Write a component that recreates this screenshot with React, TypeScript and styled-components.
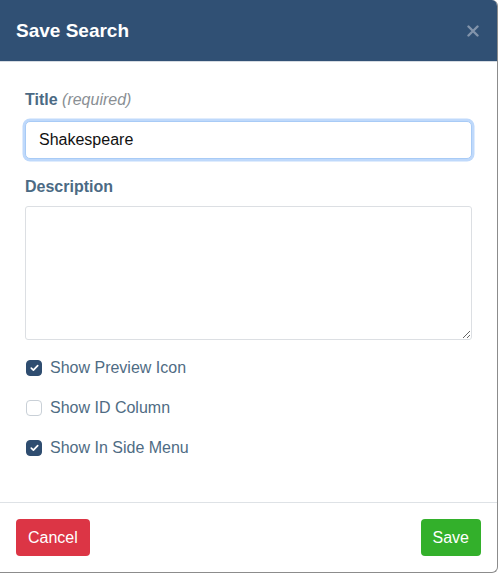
import styled, { createGlobalStyle } from "styled-components";

const GlobalStyle = createGlobalStyle`
  html, body {
    margin: 0;
    padding: 0;
    background: #fff;
    font-family: "Liberation Sans", Arial, sans-serif;
  }
`

const Modal = styled.div`
  width: 497px;
  height: 572px;
  display: flex;
  flex-direction: column;
  background: #fff;
  border-right: 1px solid #8c8c8c;
  border-bottom: 1px solid #8c8c8c;
  border-radius: 0 6px 6px 0;
  overflow: hidden;
`

const Header = styled.div`
  height: 61px;
  flex-shrink: 0;
  display: flex;
  align-items: center;
  justify-content: space-between;
  padding: 0 16px;
  background: #305074;
  border-bottom: 1px solid #d5dbe2;
`

const HeaderTitle = styled.h2`
  margin: 0;
  color: #fff;
  font-size: 19px;
  font-weight: bold;
`

const CloseButton = styled.button`
  border: none;
  background: transparent;
  padding: 0;
  margin-right: 2px;
  display: flex;
  cursor: pointer;
`

const Body = styled.div`
  flex: 1;
  padding: 26px 25px 0;
  display: flex;
  flex-direction: column;
`

const Label = styled.label<{ spaced?: boolean }>`
  display: block;
  margin-top: ${p => p.spaced ? "16px" : "0"};
  font-size: 16px;
  line-height: 24px;
  font-weight: bold;
  color: #4b6a84;
`

const Hint = styled.span`
  font-style: italic;
  font-weight: normal;
  color: #8a8f94;
  font-size: 16px;
`

const TextInput = styled.input`
  box-sizing: border-box;
  width: 100%;
  height: 38px;
  margin-top: 9px;
  padding: 0 13px;
  font-size: 16px;
  font-family: "Liberation Sans", Arial, sans-serif;
  color: #111;
  border: 1px solid #a8cbf6;
  border-radius: 5px;
  box-shadow: 0 0 0 2.5px #bfd9fb;
  outline: none;
`

const TextArea = styled.textarea`
  box-sizing: border-box;
  width: 100%;
  height: 134px;
  margin-top: 7px;
  padding: 8px 12px;
  font-size: 16px;
  font-family: "Liberation Sans", Arial, sans-serif;
  border: 1px solid #dcdfe3;
  border-radius: 3px;
  resize: vertical;
  outline: none;
`

const CheckList = styled.div`
  display: flex;
  flex-direction: column;
  gap: 16px;
  margin-top: 16px;
`

const CheckRow = styled.label`
  display: flex;
  align-items: center;
  gap: 8px;
  height: 24px;
  padding-left: 1px;
  font-size: 16px;
  color: #4f6c84;
  cursor: pointer;
`

const Box = styled.span<{ checked: boolean }>`
  width: 16px;
  height: 16px;
  box-sizing: border-box;
  border-radius: 4px;
  display: flex;
  align-items: center;
  justify-content: center;
  background: ${p => p.checked ? "#2f4d70" : "#fff"};
  border: 1px solid ${p => p.checked ? "#2f4d70" : "#c9d0d7"};
`

const Footer = styled.div`
  flex-shrink: 0;
  display: flex;
  justify-content: space-between;
  padding: 16px;
  border-top: 1px solid #dee2e6;
`

const Button = styled.button<{ variant: "danger" | "success" }>`
  height: 37px;
  padding: 0 12px;
  border: none;
  border-radius: 4px;
  font-size: 16px;
  font-family: "Liberation Sans", Arial, sans-serif;
  color: #fff;
  background: ${p => p.variant === "danger" ? "#dc3545" : "#33b02b"};
  cursor: pointer;
`

const Check = ({ checked, label }: { checked: boolean; label: string }) => (
  <CheckRow>
    <Box checked={checked}>
      {checked && (
        <svg width="9" height="8" viewBox="0 0 9 8">
          <path d="M1.3 4.2 L3.4 6.2 L7.7 1.6" stroke="#fff" strokeWidth="1.7" fill="none" strokeLinecap="round" strokeLinejoin="round" />
        </svg>
      )}
    </Box>
    {label}
  </CheckRow>
)

const App = () => {
  return (
    <>
      <GlobalStyle />
      <Modal>
        <Header>
          <HeaderTitle>Save Search</HeaderTitle>
          <CloseButton aria-label="Close">
            <svg width="12" height="12" viewBox="0 0 12 12">
              <path d="M1.5 1.5 L10.5 10.5 M10.5 1.5 L1.5 10.5" stroke="#8294ab" strokeWidth="2.4" strokeLinecap="round" />
            </svg>
          </CloseButton>
        </Header>
        <Body>
          <Label>Title <Hint>(required)</Hint></Label>
          <TextInput defaultValue="Shakespeare" />
          <Label spaced>Description</Label>
          <TextArea />
          <CheckList>
            <Check checked label="Show Preview Icon" />
            <Check checked={false} label="Show ID Column" />
            <Check checked label="Show In Side Menu" />
          </CheckList>
        </Body>
        <Footer>
          <Button variant="danger">Cancel</Button>
          <Button variant="success">Save</Button>
        </Footer>
      </Modal>
    </>
  )
}

export default App;
